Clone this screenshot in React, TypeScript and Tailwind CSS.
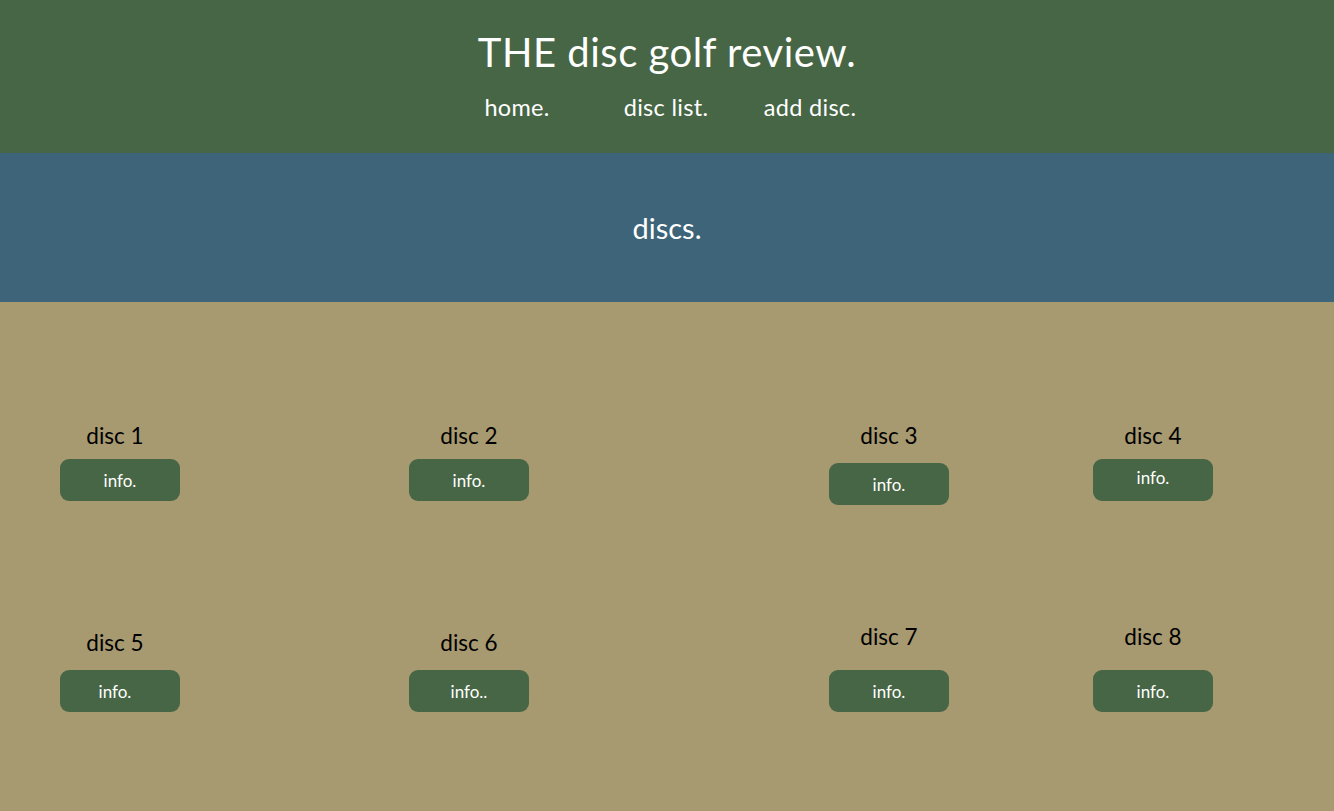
import React from "react";

const font = { fontFamily: "Lato, 'Noto Sans', sans-serif" };

function Card({
  title,
  label,
  titleClass = "",
  btnClass = "",
  textClass = "",
}: {
  title: string;
  label: string;
  titleClass?: string;
  btnClass?: string;
  textClass?: string;
}) {
  return (
    <div className="flex flex-col items-center">
      <h3 className={`text-[22.5px] leading-[28px] text-black ${titleClass}`}>{title}</h3>
      <button
        className={`flex h-[42px] w-[120px] items-center justify-center rounded-[9px] bg-[#476645] pt-[2px] text-[17px] text-white ${btnClass}`}
      >
        <span className={textClass}>{label}</span>
      </button>
    </div>
  );
}

export default function App() {
  return (
    <div className="flex min-h-[811px] flex-col bg-[#a79970]" style={font}>
      <header className="flex h-[153px] flex-col items-center bg-[#476645] pt-[26px] text-white">
        <h1 className="text-[40px] leading-[52px] tracking-[0.5px]">THE disc golf review.</h1>
        <nav className="mt-[15px] flex w-full justify-center pr-[12px] text-[23.5px] leading-[28px] tracking-[0.3px]">
          <a className="w-[149px] text-center">home.</a>
          <a className="w-[149px] text-center">disc list.</a>
          <a className="w-[139px] text-center">add disc.</a>
        </nav>
      </header>
      <section className="flex h-[149px] items-center justify-center bg-[#3d6479] text-white">
        <h2 className="text-[29px] leading-[34px]">discs.</h2>
      </section>
      <main className="flex flex-col pt-[120px]">
        <div className="grid grid-cols-[240px_458px_382px_146px] items-start">
          <Card title="disc 1" label="info." titleClass="mr-[10px]" btnClass="mt-[9px]" />
          <Card title="disc 2" label="info." btnClass="mt-[9px]" />
          <Card title="disc 3" label="info." btnClass="mt-[13px]" />
          <Card title="disc 4" label="info." btnClass="mt-[9px]" textClass="mb-[7px]" />
        </div>
        <div className="mt-[118px] grid grid-cols-[240px_458px_382px_146px] items-start">
          <Card
            title="disc 5"
            label="info."
            titleClass="mt-[6px] mr-[10px]"
            btnClass="mt-[13px]"
            textClass="mr-[10px]"
          />
          <Card title="disc 6" label="info.." titleClass="mt-[6px]" btnClass="mt-[13px]" />
          <Card title="disc 7" label="info." btnClass="mt-[19px]" />
          <Card title="disc 8" label="info." btnClass="mt-[19px]" />
        </div>
      </main>
    </div>
  );
}
